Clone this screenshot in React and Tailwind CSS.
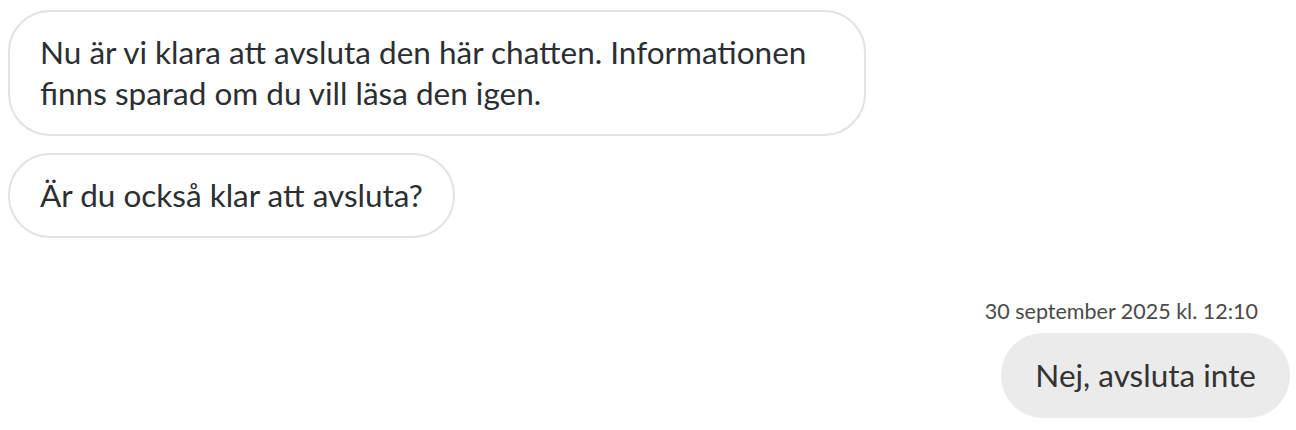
export default function App() {
    return (
        <div className="w-full h-[430px] bg-white flex flex-col pl-[8px] pr-[6px] pt-[10px]" style={{ fontFamily: "Lato, 'Noto Sans', sans-serif" }}>
            <div className="w-fit max-w-[858px] border-2 border-[#e2e2e2] rounded-[42px] px-[30px] py-[20px] text-[31.5px] leading-[41px] text-[#2b2f33]">
                Nu är vi klara att avsluta den här chatten. Informationen finns sparad om du vill läsa den igen.
            </div>
            <div className="w-fit mt-[17px] border-2 border-[#e2e2e2] rounded-[42px] px-[30px] py-[20px] text-[31.5px] leading-[41px] text-[#2b2f33]">
                Är du också klar att avsluta?
            </div>
            <div className="flex flex-col items-end mt-[60px]">
                <p className="text-[21.5px] leading-[26px] text-[#4a4a4a] pr-[32px]">30 september 2025 kl. 12:10</p>
                <div className="mt-[9px] bg-[#ebebeb] rounded-[42px] px-[34px] py-[22px] text-[31.5px] leading-[41px] text-[#333333]">
                    Nej, avsluta inte
                </div>
            </div>
        </div>
    );
}
